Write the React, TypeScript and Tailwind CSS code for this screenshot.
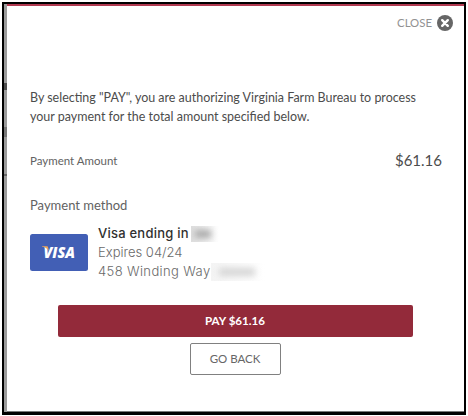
const card = {
  expires: "04/24",
  address: "458 Winding Way",
};

const amount = "$61.16";

function CloseIcon() {
  return (
    <svg viewBox="0 0 16 16" className="size-4">
      <circle cx="8" cy="8" r="8" fill="#666" />
      <path d="M5.2 5.2l5.6 5.6M10.8 5.2l-5.6 5.6" stroke="#fff" strokeWidth="2.4" strokeLinecap="round" />
    </svg>
  );
}

function VisaCard() {
  return (
    <svg viewBox="0 0 58 37" className="h-[37px] w-[58px] shrink-0">
      <rect width="58" height="37" rx="2.5" fill="#425fb5" />
      <text
        x="13.5"
        y="24.3"
        textLength="31.5"
        lengthAdjust="spacingAndGlyphs"
        fill="#fff"
        fontFamily="Open Sans, sans-serif"
        fontSize="16"
        fontWeight="800"
        fontStyle="italic"
      >
        VISA
      </text>
      <path d="M12 12.3h4.5c1 0 1.5.5 1.700 1.400l.7 3.300c-1.300-2.300-3.500-3.800-6.900-4.300z" fill="#eda558" />
    </svg>
  );
}

export default function App() {
  return (
    <div className="h-[416px] w-[468px] bg-white p-0.5 font-['Lato',sans-serif] text-[#4c4c4c]">
      <div className="flex h-[413px] w-[464px] border-2 border-b-3 border-black">
        <div className="flex w-[3px] shrink-0 flex-col bg-[#9b9b9b]">
          <div className="mt-[79px] h-[7px] bg-[#4d4d4d]" />
          <div className="mt-[37px] h-2.5 bg-[#777]" />
          <div className="mt-[37px] h-0.5 bg-[#666]" />
        </div>
        <div className="flex-1 border-t-2 border-b border-[#b23a51] border-b-[#777] pr-5 pl-[23px]">
          <div className="-mr-[9px] flex h-[34px] items-center justify-end gap-[5px] text-[11.4px] text-[#929292]">
            <span>CLOSE</span>
            <CloseIcon />
          </div>

          <p className="mt-12 text-[12.47px] leading-[19px] whitespace-nowrap">
            By selecting "PAY", you are authorizing Virginia Farm Bureau to process
            <br />
            your payment for the total amount specified below.
          </p>

          <div className="mt-[24px] flex h-5 items-center justify-between pr-0.5">
            <span className="pt-0.5 text-[11.5px] text-[#626262]">Payment Amount</span>
            <span className="text-[15px]">{amount}</span>
          </div>

          <div className="mt-[25px] h-5 text-[13px] leading-5 text-[#626262]">Payment method</div>

          <div className="mt-[9px] flex items-center gap-[10px] font-['Inter',sans-serif] text-[13px] leading-[19px] text-[#696969]">
            <VisaCard />
            <div className="whitespace-nowrap">
              <div className="flex items-center font-medium tracking-[0.23px] text-[#303030]">
                Visa ending in
                <span className="ml-0.5 flex h-4 w-7 items-center overflow-hidden bg-linear-to-r from-[#dedede] to-white">
                  <span className="ml-1 h-2 w-4 bg-[#aaa] blur-[3px]" />
                </span>
              </div>
              <div className="font-light">Expires {card.expires}</div>
              <div className="flex items-center font-light tracking-[0.38px]">
                {card.address}
                <span className="flex h-[18px] w-[54px] items-center overflow-hidden bg-linear-to-r from-[#f4f4f4] to-white">
                  <span className="ml-2 h-2 w-9 bg-[#d6d6d6] blur-[3px]" />
                </span>
              </div>
            </div>
          </div>

          <div className="mt-[24px] flex flex-col items-center gap-1.5 pr-1">
            <button className="h-8 w-[355px] rounded-xs bg-[#932a3a] text-[11.6px] font-bold text-white">PAY {amount}</button>
            <button className="h-8 w-[91px] rounded-xs border border-[#808080] text-[11.5px] text-[#666]">GO BACK</button>
          </div>
        </div>
      </div>
    </div>
  );
}
